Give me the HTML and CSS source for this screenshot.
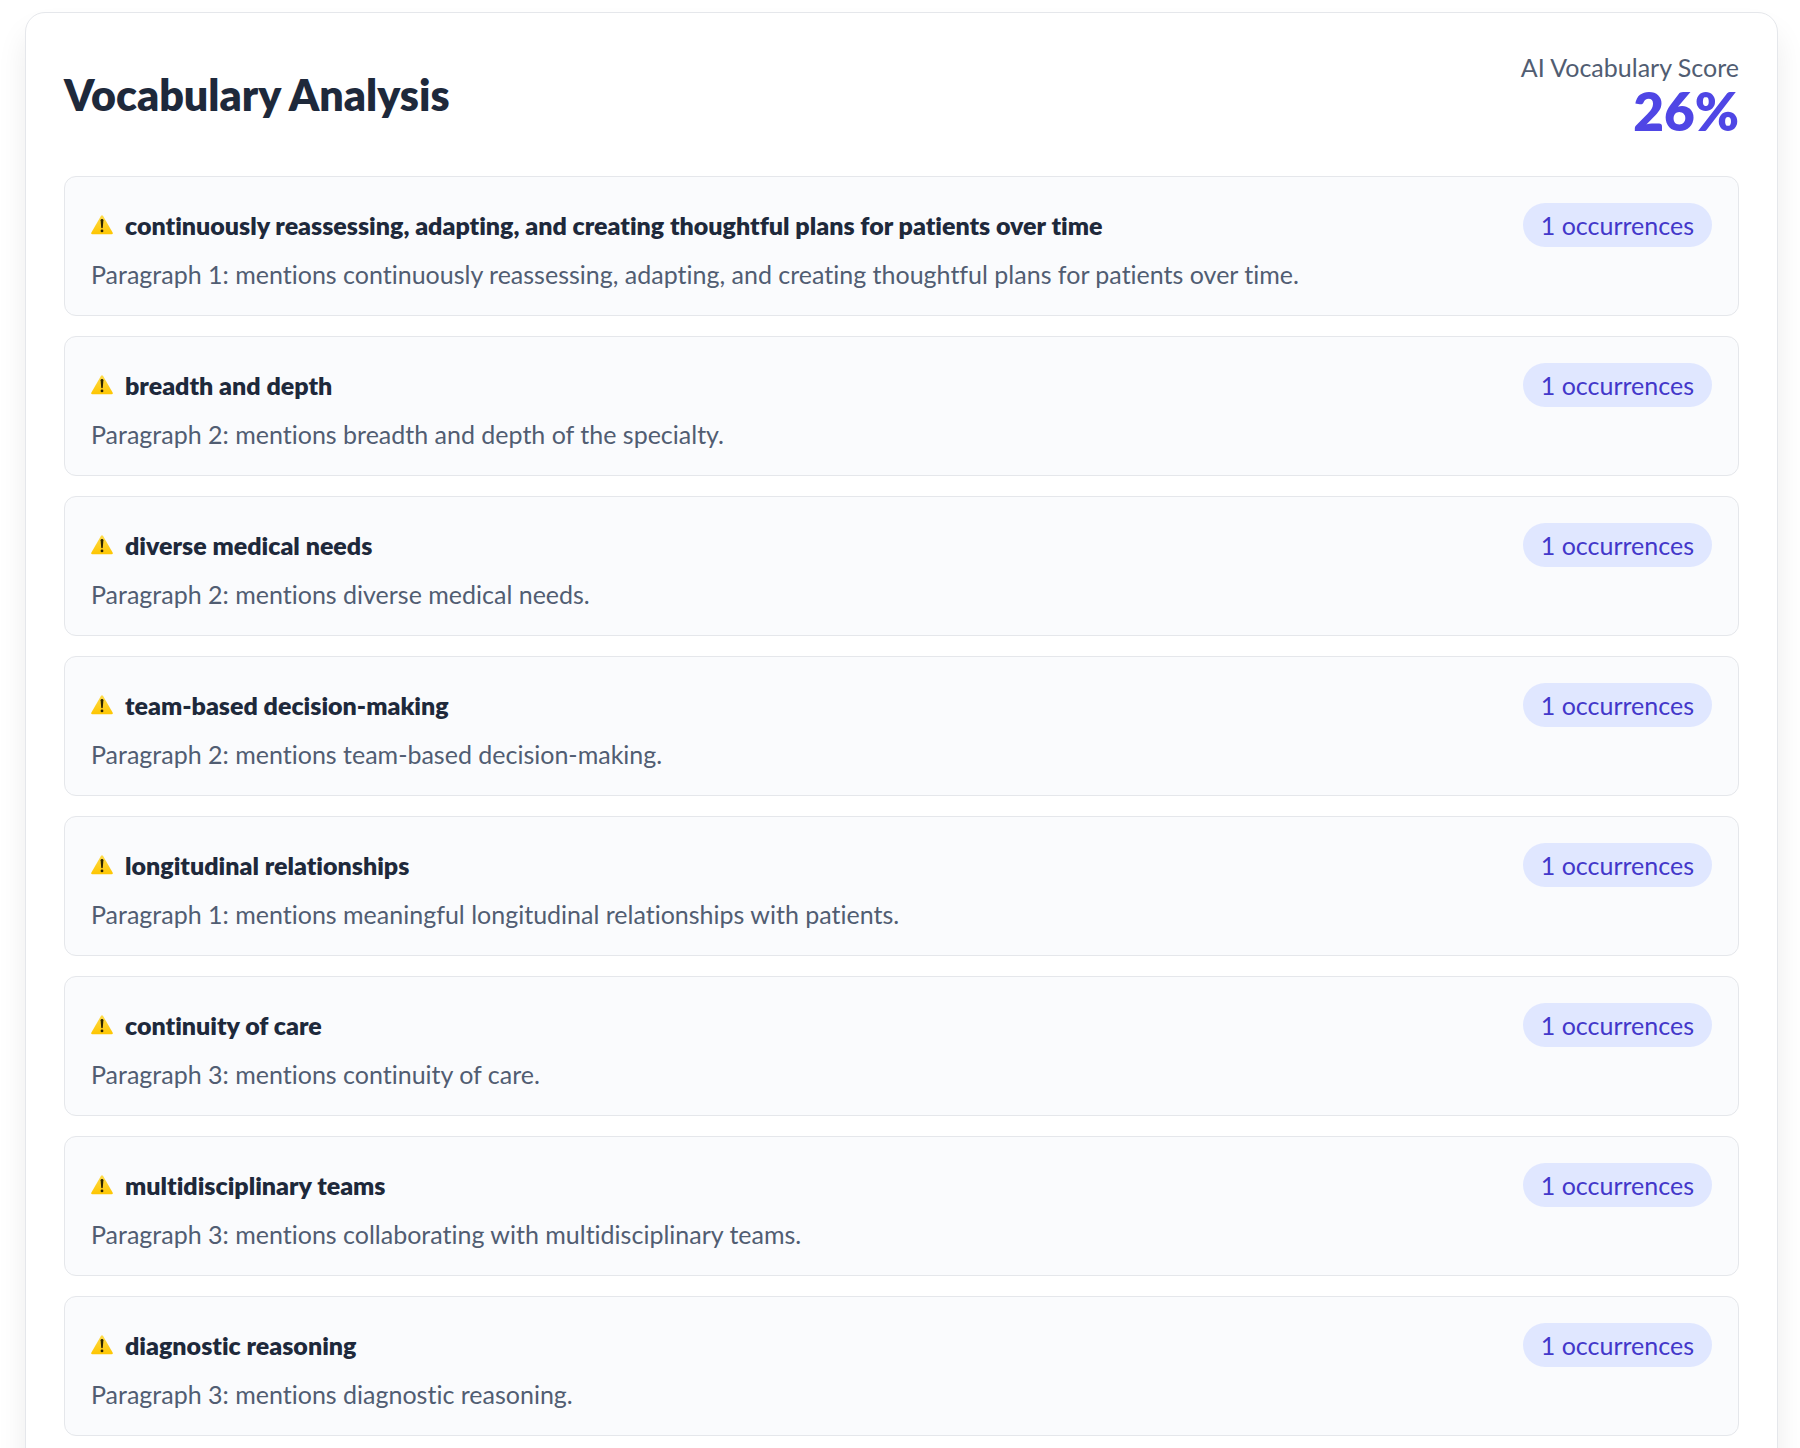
FILE: index.html
```html
<!DOCTYPE html>
<html lang="en">
<head>
    <meta charset="UTF-8">
    <meta name="viewport" content="width=device-width, initial-scale=1.0">
    <title>Vocabulary Analysis</title>
    <link rel="stylesheet" href="styles.css">
</head>
<body>
    <svg class="sprite" aria-hidden="true">
        <defs>
            <linearGradient id="warning-fill" x1="0" y1="0" x2="0" y2="1">
                <stop offset="0" stop-color="#ffdb4a"/>
                <stop offset="1" stop-color="#fdc500"/>
            </linearGradient>
        </defs>
        <symbol id="warning" viewBox="0 0 22 20">
            <path d="M9.9 1.1Q11-.5 12.1 1.1L21.6 17.4Q22.4 19.2 20.6 19.2H1.4Q-.4 19.2.4 17.4Z" fill="url(#warning-fill)"/>
            <path d="M9.6 5.3Q9.6 4 11 4T12.4 5.3L11.8 12.6Q11.7 13.3 11 13.3T10.2 12.6Z" fill="#2b2300"/>
            <circle cx="11" cy="15.9" r="1.4" fill="#2b2300"/>
        </symbol>
    </svg>

    <main class="panel">
        <header class="panel-header">
            <h1>Vocabulary Analysis</h1>
            <div class="score">
                <div class="score-label">AI Vocabulary Score</div>
                <div class="score-value">26%</div>
            </div>
        </header>

        <div class="phrases">
            <section class="phrase">
                <div class="phrase-header">
                    <h2><svg class="icon"><use href="#warning"/></svg>continuously reassessing, adapting, and creating thoughtful plans for patients over time</h2>
                    <span class="count">1 occurrences</span>
                </div>
                <p>Paragraph 1: mentions continuously reassessing, adapting, and creating thoughtful plans for patients over time.</p>
            </section>

            <section class="phrase">
                <div class="phrase-header">
                    <h2><svg class="icon"><use href="#warning"/></svg>breadth and depth</h2>
                    <span class="count">1 occurrences</span>
                </div>
                <p>Paragraph 2: mentions breadth and depth of the specialty.</p>
            </section>

            <section class="phrase">
                <div class="phrase-header">
                    <h2><svg class="icon"><use href="#warning"/></svg>diverse medical needs</h2>
                    <span class="count">1 occurrences</span>
                </div>
                <p>Paragraph 2: mentions diverse medical needs.</p>
            </section>

            <section class="phrase">
                <div class="phrase-header">
                    <h2><svg class="icon"><use href="#warning"/></svg>team-based decision-making</h2>
                    <span class="count">1 occurrences</span>
                </div>
                <p>Paragraph 2: mentions team-based decision-making.</p>
            </section>

            <section class="phrase">
                <div class="phrase-header">
                    <h2><svg class="icon"><use href="#warning"/></svg>longitudinal relationships</h2>
                    <span class="count">1 occurrences</span>
                </div>
                <p>Paragraph 1: mentions meaningful longitudinal relationships with patients.</p>
            </section>

            <section class="phrase">
                <div class="phrase-header">
                    <h2><svg class="icon"><use href="#warning"/></svg>continuity of care</h2>
                    <span class="count">1 occurrences</span>
                </div>
                <p>Paragraph 3: mentions continuity of care.</p>
            </section>

            <section class="phrase">
                <div class="phrase-header">
                    <h2><svg class="icon"><use href="#warning"/></svg>multidisciplinary teams</h2>
                    <span class="count">1 occurrences</span>
                </div>
                <p>Paragraph 3: mentions collaborating with multidisciplinary teams.</p>
            </section>

            <section class="phrase">
                <div class="phrase-header">
                    <h2><svg class="icon"><use href="#warning"/></svg>diagnostic reasoning</h2>
                    <span class="count">1 occurrences</span>
                </div>
                <p>Paragraph 3: mentions diagnostic reasoning.</p>
            </section>
        </div>
    </main>
</body>
</html>
```
FILE: styles.css
```css
* {
    box-sizing: border-box;
}

body {
    font-family: Lato, "Open Sans", sans-serif;
    font-size: 25px;
    line-height: 30px;
    font-variant-ligatures: none;
    color: #515d72;
    background: #fff;
    margin: 0;
    padding: 12px 22px 0 25px;
    height: 100vh;
    overflow: hidden;
}

h1, h2, p {
    margin: 0;
}

.sprite {
    position: absolute;
    width: 0;
    height: 0;
}

.panel {
    padding: 38px;
    background: #fff;
    border: 1px solid #e5e7eb;
    border-radius: 20px;
    box-shadow: 0 20px 30px rgba(0, 0, 0, 0.08);
}

.panel-header {
    display: flex;
    justify-content: space-between;
    align-items: center;
    margin-bottom: 37px;
}

h1 {
    font-size: 43px;
    line-height: 52px;
    font-weight: 800;
    color: #1e293b;
}

.score {
    text-align: right;
}

.score-label {
    line-height: 32px;
}

.score-value {
    font-size: 53px;
    line-height: 56px;
    font-weight: 800;
    color: #4f46e5;
}

.phrases {
    display: flex;
    flex-direction: column;
    gap: 20px;
}

.phrase {
    padding: 26px;
    background: #fafbfd;
    border: 1px solid #e5e7eb;
    border-radius: 12px;
}

.phrase-header {
    display: flex;
    justify-content: space-between;
    align-items: center;
    margin-bottom: 12px;
}

h2 {
    display: flex;
    align-items: center;
    gap: 12px;
    font-size: 25px;
    font-weight: 800;
    color: #1e293b;
}

.icon {
    width: 22px;
    height: 20px;
}

.count {
    padding: 7px 18px;
    border-radius: 22px;
    background: #e0e7ff;
    color: #4338ca;
}
```
